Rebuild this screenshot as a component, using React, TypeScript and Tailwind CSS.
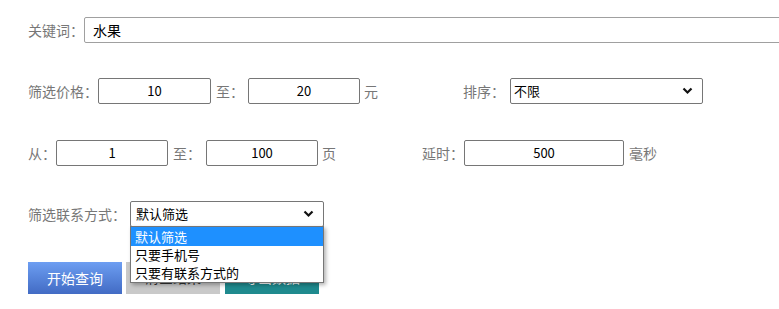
import React from 'react';

const font = { fontFamily: '"Microsoft YaHei", "Noto Sans CJK SC", "Liberation Sans", sans-serif' };

const Chevron = () => (
  <svg width="11" height="8" viewBox="0 0 11 8" className="shrink-0">
    <path d="M1.5 1.5 L5.5 5.5 L9.5 1.5" fill="none" stroke="#111" strokeWidth="2.2" />
  </svg>
);

const NumInput = ({ value, className }: { value: string; className: string }) => (
  <div
    className={`h-[26px] border border-[#767676] rounded-[2px] bg-white flex items-center justify-center text-[13px] text-black ${className}`}
  >
    {value}
  </div>
);

const Label = ({ children, className = '' }: { children: React.ReactNode; className?: string }) => (
  <span className={`text-[14px] text-[#777] whitespace-nowrap leading-none ${className}`}>{children}</span>
);

const App: React.FC = () => {
  const options = ['默认筛选', '只要手机号', '只要有联系方式的'];

  return (
    <div className="w-[779px] h-[309px] bg-white overflow-hidden pl-[28px] pt-[17px]" style={font}>
      {/* keyword */}
      <div className="flex items-center h-[26px]">
        <Label className="w-[56px]">关键词：</Label>
        <div className="h-[26px] w-[720px] shrink-0 border border-[#a0a0a0] rounded-[2px] flex items-center pl-[8px] text-[14px] text-black">
          水果
        </div>
      </div>

      {/* price + sort */}
      <div className="flex items-center h-[26px] mt-[35px]">
        <Label className="w-[70px]">筛选价格：</Label>
        <NumInput value="10" className="w-[113px]" />
        <Label className="ml-[5px]">至：</Label>
        <NumInput value="20" className="w-[112px] ml-[4px]" />
        <Label className="ml-[4px]">元</Label>
        <Label className="ml-[85px]">排序：</Label>
        <div className="ml-[5px] w-[193px] h-[26px] border border-[#767676] rounded-[2px] flex items-center justify-between pl-[3px] pr-[9px] text-[13px] text-black">
          <span>不限</span>
          <Chevron />
        </div>
      </div>

      {/* pages + delay */}
      <div className="flex items-center h-[26px] mt-[36px]">
        <Label className="w-[28px]">从：</Label>
        <NumInput value="1" className="w-[112px]" />
        <Label className="ml-[5px]">至：</Label>
        <NumInput value="100" className="w-[112px] ml-[5px]" />
        <Label className="ml-[4px]">页</Label>
        <Label className="ml-[86px]">延时：</Label>
        <NumInput value="500" className="w-[160px]" />
        <Label className="ml-[5px]">毫秒</Label>
      </div>

      {/* contact filter */}
      <div className="flex items-center h-[26px] mt-[35px]">
        <Label className="w-[98px]">筛选联系方式：</Label>
        <div className="relative ml-[4px]">
          <div className="w-[194px] h-[26px] border border-[#767676] rounded-[2px] flex items-center justify-between pl-[5px] pr-[9px] text-[13px] text-black">
            <span>默认筛选</span>
            <Chevron />
          </div>
          <div className="absolute left-0 top-[25px] z-10 w-[194px] bg-white border border-[#767676] shadow-[2px_2px_4px_rgba(0,0,0,0.3)] text-[13px] leading-[18px]">
            {options.map((o, i) => (
              <div
                key={o}
                className={i === 0 ? 'bg-[#1e90ff] text-white px-[4px] h-[19px] leading-[19px]' : 'text-black px-[4px] h-[18px]'}
              >
                {o}
              </div>
            ))}
          </div>
        </div>
      </div>

      {/* buttons */}
      <div className="flex mt-[35px]">
        <button className="w-[94px] h-[32px] bg-gradient-to-b from-[#6d9ef2] to-[#426bc4] text-white text-[14px]">
          开始查询
        </button>
        <button className="ml-[4px] w-[94px] h-[32px] bg-[#c9c9c9] text-[#333] text-[14px] flex items-end justify-center pb-[6px]">
          清空结果
        </button>
        <button className="ml-[5px] w-[94px] h-[32px] bg-[#1f8a8e] text-white text-[14px] flex items-end justify-center pb-[6px]">
          导出数据
        </button>
      </div>
    </div>
  );
};

export default App;
